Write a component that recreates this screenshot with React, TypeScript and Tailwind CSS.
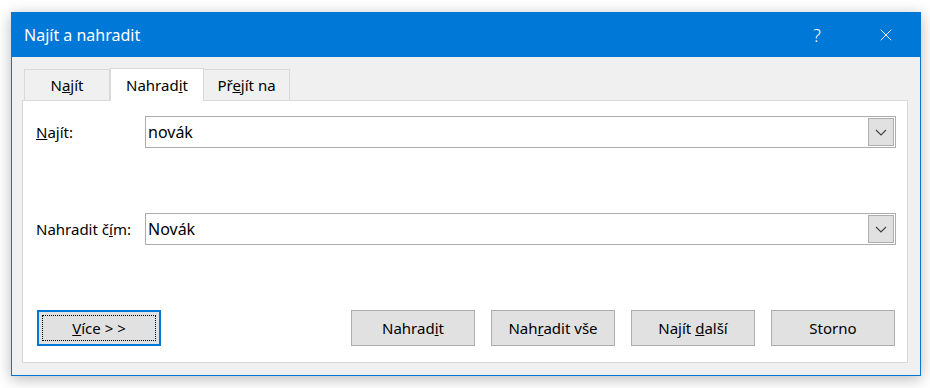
import { X } from "lucide-react"

function Chevron() {
	return (
		<svg width="12" height="7" viewBox="0 0 12 7" fill="none">
			<path d="M1 1 L6 6 L11 1" stroke="#404040" strokeWidth="1.1" />
		</svg>
	)
}

function ComboBox({ value }: { value: string }) {
	return (
		<div className="flex-1 h-[32px] flex items-center border border-[#adadad] bg-white">
			<span className="flex-1 pl-[2px] text-[16px] text-black">{value}</span>
			<div className="w-[26px] h-[28px] mr-[1px] flex items-center justify-center border border-[#adadad] bg-[#e1e1e1]">
				<Chevron />
			</div>
		</div>
	)
}

function Button({ children, focused }: { children: React.ReactNode; focused?: boolean }) {
	if (focused) {
		return (
			<div className="w-[124px] h-[36px] border-2 border-[#0078d7] bg-[#e1e1e1] p-[3px]">
				<div className="w-full h-full border border-dotted border-black flex items-center justify-center text-[15px] text-black">
					<span>{children}</span>
				</div>
			</div>
		)
	}
	return (
		<div className="w-[124px] h-[36px] border border-[#adadad] bg-[#e1e1e1] flex items-center justify-center text-[15px] text-black">
			<span>{children}</span>
		</div>
	)
}

export default function App() {
	return (
		<div className="w-[930px] h-[388px] bg-white pl-[11px] pt-[12px]" style={{ fontFamily: '"Noto Sans", "Open Sans", sans-serif' }}>
			<div className="w-[910px] h-[364px] flex flex-col border border-[#0078d7] shadow-[0_3px_14px_rgba(0,0,0,0.28)]">
				{/* title bar */}
				<div className="h-[44px] bg-[#0078d7] flex items-center pl-3 text-white">
					<span className="flex-1 text-[16px]">Najít a nahradit</span>
					<span className="text-[18px] font-light mr-[55px]">?</span>
					<X className="w-[20px] h-[20px] mr-[24px]" strokeWidth={1.1} />
				</div>

				{/* body */}
				<div className="flex-1 bg-[#f0f0f0] pl-[10px] pr-[12px] pt-[11px] pb-[12px] flex flex-col">
					<div className="flex items-end ml-[2px] text-[15px] text-black">
						<div className="w-[86px] h-[31px] border border-[#d9d9d9] border-b-0 flex items-center justify-center">
							<span>
								N<span className="underline">a</span>jít
							</span>
						</div>
						<div className="w-[94px] h-[33px] border border-[#d9d9d9] border-b-0 bg-white -mb-px relative z-10 flex items-center justify-center">
							<span>
								Nahrad<span className="underline">i</span>t
							</span>
						</div>
						<div className="w-[86px] h-[31px] border border-[#d9d9d9] border-b-0 border-l-0 flex items-center justify-center">
							<span>
								Př<span className="underline">e</span>jít na
							</span>
						</div>
					</div>

					<div className="flex-1 bg-white border border-[#d9d9d9] pl-[13px] pr-[11px] pt-[15px] flex flex-col text-[15px] text-black">
						<div className="flex items-center">
							<span className="w-[109px]">
								<span className="underline">N</span>ajít:
							</span>
							<ComboBox value="novák" />
						</div>

						<div className="flex items-center mt-[65px]">
							<span className="w-[109px]">
								Nahradit č<span className="underline">í</span>m:
							</span>
							<ComboBox value="Novák" />
						</div>

						<div className="flex items-center mt-[65px] pl-[1px]">
							<Button focused>
								<span className="underline">V</span>íce &gt; &gt;
							</Button>
							<div className="flex-1" />
							<div className="flex gap-4 pr-[1px]">
								<Button>
									Nahrad<span className="underline">i</span>t
								</Button>
								<Button>
									Nah<span className="underline">r</span>adit vše
								</Button>
								<Button>
									Najít <span className="underline">d</span>alší
								</Button>
								<Button>Storno</Button>
							</div>
						</div>
					</div>
				</div>
			</div>
		</div>
	)
}
